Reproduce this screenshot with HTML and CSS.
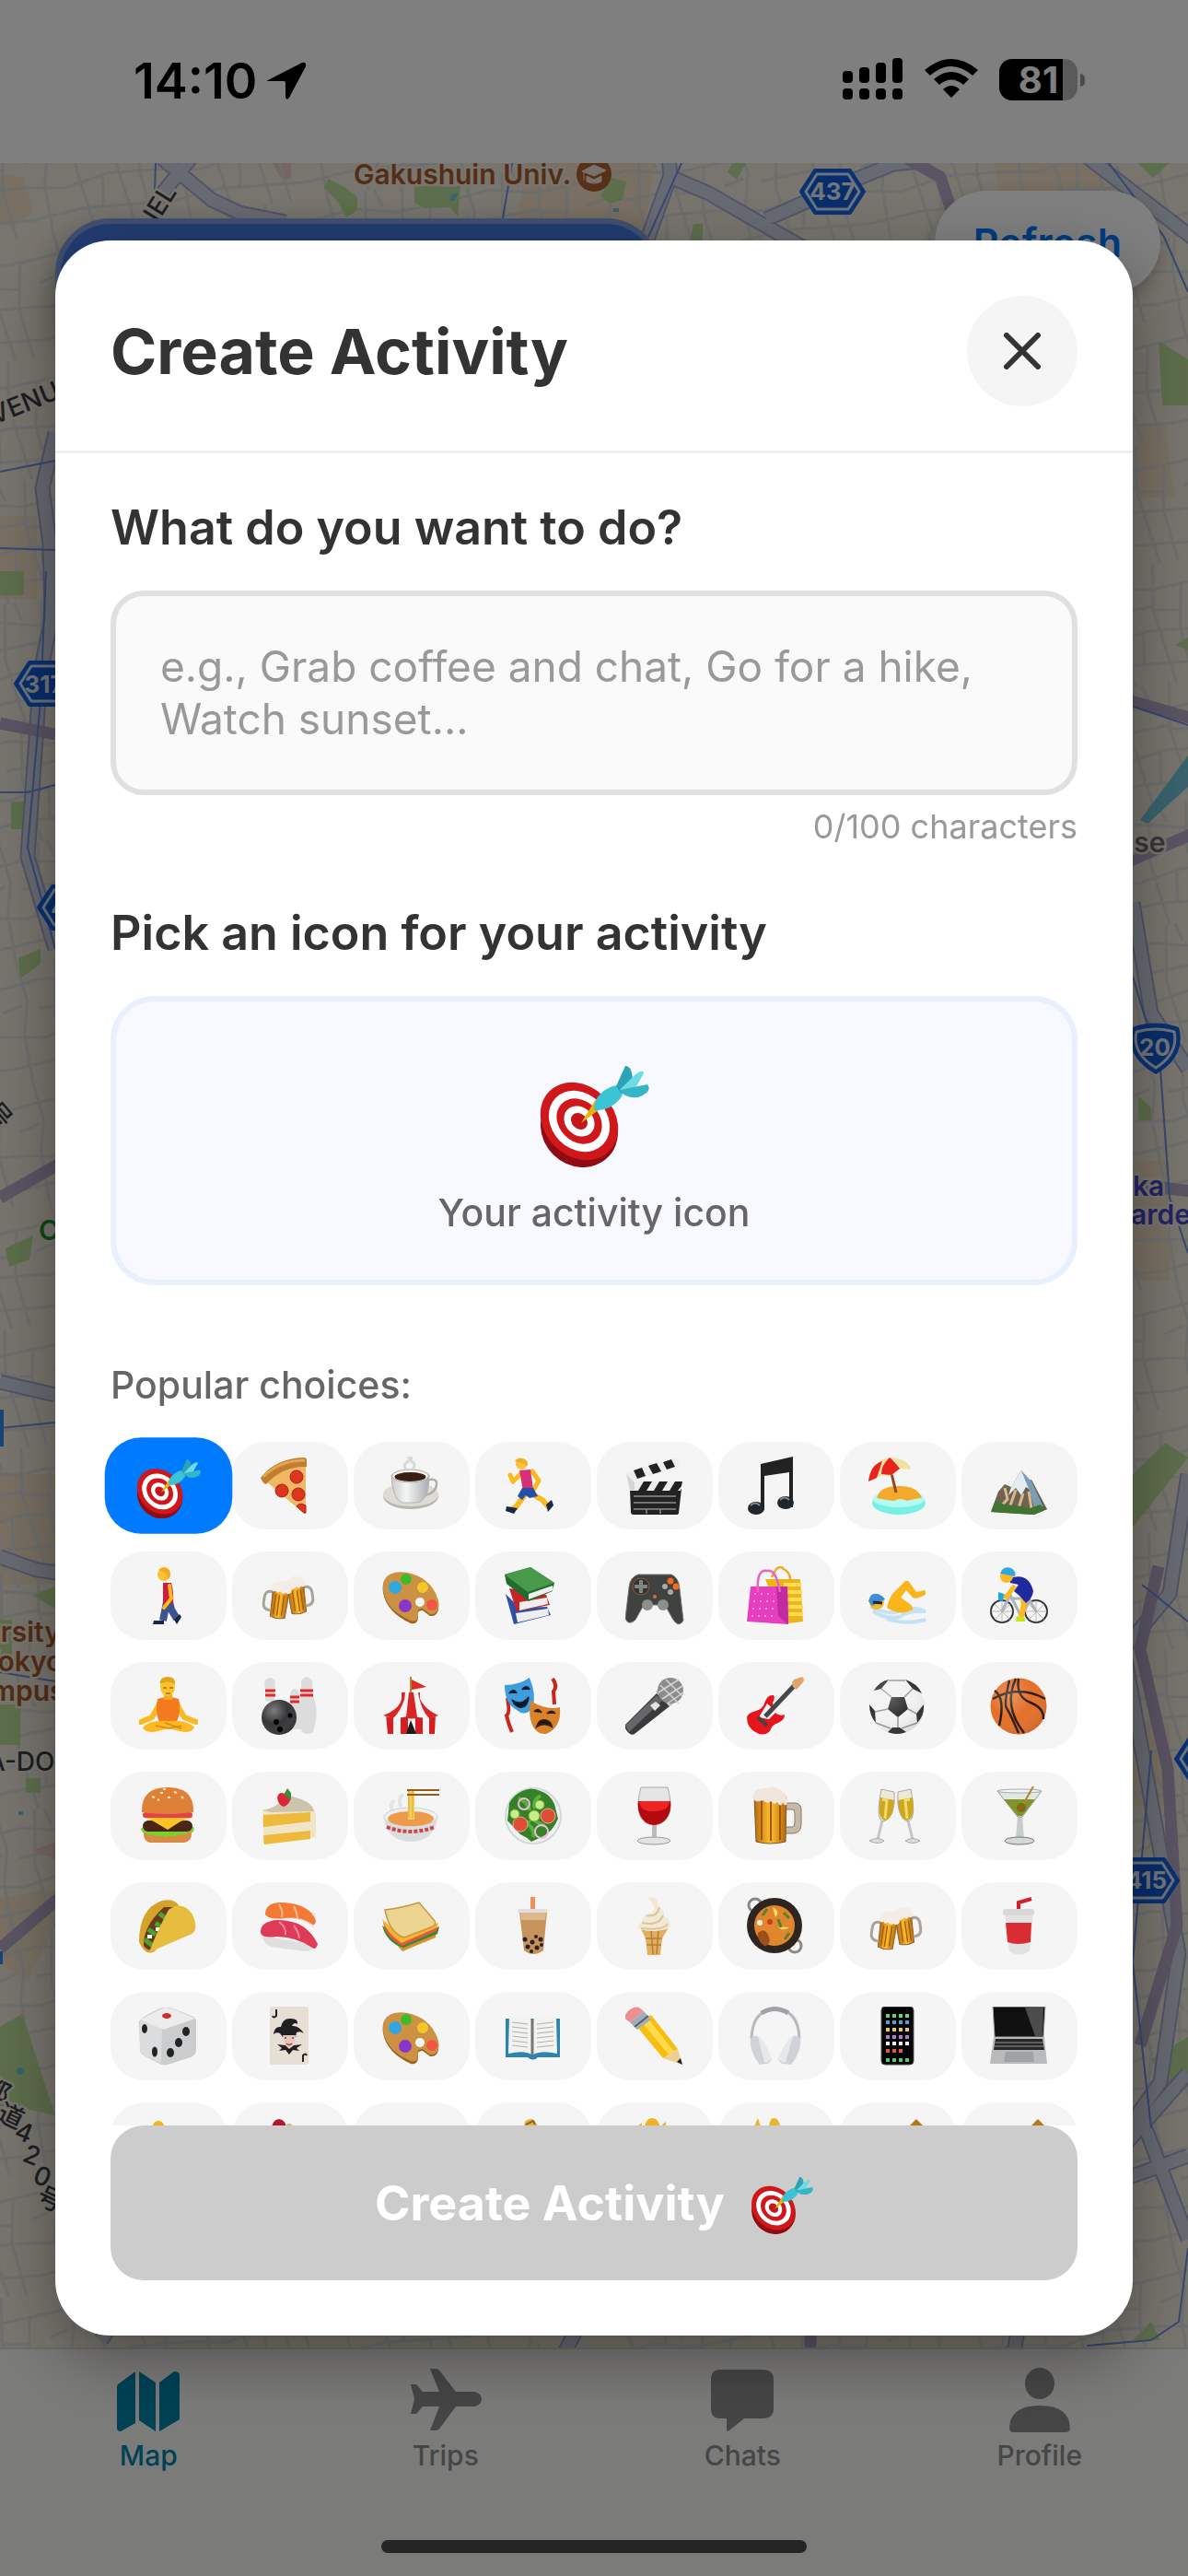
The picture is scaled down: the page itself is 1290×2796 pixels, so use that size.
FILE: index.html
```html
<!DOCTYPE html>
<html lang="en">
<head>
<meta charset="utf-8">
<meta name="viewport" content="width=device-width, initial-scale=1">
<title>Create Activity</title>
<link rel="stylesheet" href="styles.css">
</head>
<body>
<svg class="sprite" aria-hidden="true">
  <defs>
    <linearGradient id="beerFill" x1="0" x2="1" y1="0" y2="0"><stop offset="0" stop-color="#b96a10"/><stop offset=".5" stop-color="#ffc02e"/><stop offset="1" stop-color="#b5660f"/></linearGradient>
    <linearGradient id="metal" x1="0" x2="1" y1="0" y2="0"><stop offset="0" stop-color="#c9cbcd"/><stop offset=".4" stop-color="#f4f5f6"/><stop offset="1" stop-color="#a9acb0"/></linearGradient>
    <radialGradient id="ballShade" cx=".35" cy=".3" r=".8"><stop offset="0" stop-color="#fff" stop-opacity=".5"/><stop offset=".5" stop-color="#fff" stop-opacity="0"/><stop offset="1" stop-color="#000" stop-opacity=".25"/></radialGradient>
    <g id="mug">
      <path d="M19 16q9-2 9 7v6q0 7-8 7" fill="none" stroke="#a9a39a" stroke-width="3"/>
      <path d="M2 12h18l-1 30q-8 3-16 0z" fill="url(#beerFill)" stroke="#8a6a3c"/>
      <path d="M7 18v22M12 18v23M16 18v22" stroke="#a85f0c" stroke-width="1.500"/>
      <path d="M0 14q-2-8 5-9q5-5 10-1q8 0 7 9q-3 4-5 1q-2 4-5 0q-4 4-6 1q-3 2-6-1z" fill="#f4ece6"/>
    </g>
  </defs>
  <symbol id="i-target" viewBox="2 4 60 60">
    <ellipse cx="24" cy="43" rx="22" ry="20" fill="#8f0d12" transform="rotate(45 24 43)"/>
    <g transform="rotate(45 24 39)"><ellipse cx="24" cy="39" rx="23" ry="19" fill="#cf171c"/><ellipse cx="24" cy="39" rx="18" ry="15" fill="#fff"/><ellipse cx="24" cy="39" rx="13.500" ry="11" fill="#cf171c"/><ellipse cx="24" cy="39" rx="9" ry="7.500" fill="#fff"/><ellipse cx="24" cy="39" rx="5" ry="4" fill="#c4161b"/></g>
    <path d="M25 40L33 27l4 4z" fill="#e9b40c"/>
    <path d="M32 33q0-9 10-13l5-1q2 4-1 8q-6 7-14 6z" fill="#3bc4d3"/>
    <path d="M44 20l5-11q4 0 4 9l-6 6z" fill="#2aa3b4"/><path d="M46 22l8-8q5-4 5-1l-5 9z" fill="#6fdbe4"/><path d="M46 22l15-3q3 4-5 7q-7 1-10-4z" fill="#34b6c6"/>
  </symbol>
  <symbol id="i-pizza" viewBox="0 0 64 64">
    <path d="M5 26Q20 7 49 8v54q-1 1-3-1z" fill="#f0b765"/><path d="M0 23Q16 2 47 1q3 0 3 3v7Q24 10 6 30q-3 0-6-7z" fill="#c07f30"/><path d="M3 22Q20 4 48 4" stroke="#e0a651" stroke-width="3" fill="none"/>
    <g fill="#dc3520" stroke="#a92112"><circle cx="23" cy="37" r="7"/><circle cx="39" cy="22" r="7"/><circle cx="41" cy="41" r="7"/><path d="M49 53q-7-4-10 1l8 7h2z"/></g>
  </symbol>
  <symbol id="i-coffee" viewBox="0 0 64 64">
    <ellipse cx="31" cy="43" rx="30" ry="14" fill="#b9b6af"/><ellipse cx="31" cy="41" rx="30" ry="13" fill="#dedbd5"/>
    <path d="M49 26q11-4 10 5q-1 8-12 11" fill="none" stroke="#b1aea8" stroke-width="2.500"/>
    <path d="M10 20h41q0 28-13 30H22Q11 47 10 20z" fill="url(#metal)" stroke="#b5b5b2"/><ellipse cx="30.500" cy="21" rx="20" ry="7" fill="#f3f2ef" stroke="#aaa"/><ellipse cx="30.500" cy="22" rx="17" ry="5" fill="#3b1e12"/>
    <path d="M26 14q-4-5 1-8t1-6M33 14q4-5 0-8t0-5" stroke="#d8d8d8" stroke-width="3" fill="none"/>
  </symbol>
  <symbol id="i-runner" viewBox="0 0 64 64">
    <path d="M24 40L13 55l-6 3M33 42l9 5 7 8" stroke="#f9b921" stroke-width="6" fill="none" stroke-linejoin="round"/>
    <path d="M3 54l12 2-4 6-9-3zM46 52l6-5 2 6-6 7z" fill="#1b2747"/>
    <path d="M18 19l-8 8-3-7M31 16l7 10-5 9" stroke="#f9b921" stroke-width="5" fill="none" stroke-linejoin="round" stroke-linecap="round"/>
    <path d="M17 15l12-1 3 22-11 1z" fill="#d72f75"/><path d="M20 34h12l5 9-9 2-4-3-4 5-5-4z" fill="#2450a8"/>
    <circle cx="19" cy="8" r="6" fill="#fbc238"/><path d="M12 5q4-6 11-2q5 3 2 8l-3-4-6-1z" fill="#f0ae22"/>
  </symbol>
  <symbol id="i-clapper" viewBox="0 0 64 64">
    <path d="M5 35h56l-3 26q0 2-3 2H9q-3 0-3-3z" fill="#232325"/><path d="M6 27h56l-2 10H5z" fill="#eee"/><path d="M20 27h9l-6 10h-9zM37 27h9l-6 10h-9zM54 27h8l-1 5-4 5h-9z" fill="#222"/>
    <path d="M0 18L56 1l3 9L5 28z" fill="#eee"/><path d="M9 15l9-3 4 9-9 3zM25 10l9-3 5 9-9 3zM41 6l9-3 4 8-9 3z" fill="#222"/><path d="M1 19l9 9v8H5z" fill="#d5d5d5"/>
    <path d="M9 43h46M9 50h46M9 57h46M23 57v5M38 57v5" stroke="#8f8f8f" stroke-width="1.500"/>
  </symbol>
  <symbol id="i-music" viewBox="0 0 64 64">
    <path d="M15 8L50 0v55h-4V17L19 21v37h-4z" fill="#222"/><ellipse cx="10" cy="56" rx="9" ry="7" fill="#20262b"/><ellipse cx="42" cy="50" rx="9" ry="7" fill="#20262b"/><path d="M4 53q5-5 10 0M36 47q5-5 10 0" stroke="#7d8b94" stroke-width="2" fill="none"/>
  </symbol>
  <symbol id="i-beach" viewBox="0 0 64 64">
    <ellipse cx="33" cy="50" rx="29" ry="13" fill="#79f0e6"/><ellipse cx="33" cy="46" rx="28" ry="9" fill="#b5fbf2"/><path d="M9 45q3-13 24-13t25 13q-10 1-16 3-8-4-14 0-9-1-19-3z" fill="#f5a92a"/>
    <path d="M25 18l5 21" stroke="#8c4a22" stroke-width="3"/>
    <path d="M0 27Q4 2 25 1q19 2 21 13l-11-1-9 7-12 1z" fill="#f2e0a2"/><path d="M0 27Q2 9 15 5L9 23zM23 1q4 3 11 12l-9 7-11-1q0-10 9-18z" fill="#e8231d"/>
  </symbol>
  <symbol id="i-mountain" viewBox="0 0 64 64">
    <path d="M1 60l8-22 7-8 7 3L34 15l6 12 5-2 17 32-14 6z" fill="#6e6350"/><path d="M23 33L34 15l11 22-6-4-5 9-6-8-8 8z" fill="#e4edf3"/><path d="M34 15l11 12 14 30-10 2-7-24z" fill="#7d9cb5"/><path d="M16 34l3 12-8 9M28 36l-7 20M36 40l-5 16M42 38l3 18" stroke="#dcb78c" stroke-width="3" fill="none"/><path d="M1 60l5-12 10 4 12 1 16 3 10-4 8 5-14 6q-20-1-47-3z" fill="#3f7431"/>
  </symbol>
  <symbol id="i-walker" viewBox="0 0 64 64">
    <path d="M30 39l-4 20M33 39l2 8 6 10" stroke="#3b5590" stroke-width="8" fill="none"/><path d="M16 59h11v4H15zM38 58l6-6 2 3-5 8z" fill="#1b2747"/>
    <path d="M26 18h9q3 11 2 23H26z" fill="#c91f3d"/><path d="M33 21l2 14-8 10" stroke="#f9b921" stroke-width="4" fill="none" stroke-linecap="round"/><circle cx="27" cy="9" r="7" fill="#fbc238"/><path d="M21 4q6-6 12 0 2 6-1 10l-4-7z" fill="#eead22"/>
  </symbol>
  <symbol id="i-beers" viewBox="0 0 64 64">
    <g transform="translate(25 10) rotate(-8)"><use href="#mug"/></g>
    <g transform="translate(35 15) rotate(8) scale(-1 1)"><use href="#mug"/></g>
  </symbol>
  <symbol id="i-palette" viewBox="0 0 64 64">
    <path d="M2 16Q9 5 28 9q26 6 33 30 2 16-9 15l-8-6q-7 0-5 6 0 10-8 8Q5 50 1 29q-1-8 1-13z" fill="#9a6424"/><path d="M3 14Q9 4 28 7q26 6 33 30 2 16-9 15l-8-6q-7 0-5 6 0 9-8 7Q5 48 1 27q-1-8 2-13z" fill="#cd9144"/>
    <circle cx="41" cy="39" r="5" fill="#f5f5f5"/><circle cx="14" cy="23" r="7" fill="#33a6df"/><circle cx="26" cy="14" r="6" fill="#3dbb2a"/><circle cx="44" cy="23" r="6" fill="#f4c62c"/><circle cx="54" cy="42" r="6" fill="#f25446"/><circle cx="25" cy="43" r="7" fill="#8738c8"/>
  </symbol>
  <symbol id="i-books" viewBox="0 0 64 64">
    <path d="M2 30l9 33 40-10-4-9-30 1z" fill="#2d51a5"/><path d="M13 51l35-5 1 7-34 8z" fill="#eee"/><path d="M6 24l8 25 36-7-4-11z" fill="#c82327"/><path d="M17 39l30-5 1 7-31 7z" fill="#eee"/>
    <path d="M1 9L29 1l26 17-2 9-26 11L3 19z" fill="#256b2d"/><path d="M1 9L29 1l26 17-29 10z" fill="#479a49"/><path d="M27 30l26-9 1 5-27 10z" fill="#eee"/>
  </symbol>
  <symbol id="i-gamepad" viewBox="0 0 64 64">
    <path d="M14 9h36q8 3 9 16l4 34q-5 8-11-1l-9-16H20l-9 16q-7 7-11-1l4-34Q5 12 14 9z" fill="#3f423f" stroke="#727672"/><circle cx="17" cy="22" r="9" fill="#303331" stroke="#9a5a30"/><path d="M17 15v14M10 22h14" stroke="#80857f" stroke-width="4"/><circle cx="24" cy="42" r="6" fill="#8b908c"/><circle cx="41" cy="42" r="6" fill="#8b908c"/><circle cx="49" cy="16" r="3.500" fill="#f26a22"/><circle cx="49" cy="28" r="3" fill="#aaa"/><circle cx="43" cy="22" r="3" fill="#aaa"/><circle cx="55" cy="22" r="3.500" fill="#f26a22"/><circle cx="32" cy="33" r="2" fill="#e3682a"/>
  </symbol>
  <symbol id="i-bags" viewBox="0 0 64 64">
    <path d="M20 14h38l3 46-16 2-8-4z" fill="#edb51b"/><path d="M40 20h19M40 28h20M42 36h18M43 44h18M44 52h17" stroke="#ffdb55" stroke-width="4"/><path d="M27 12Q34-4 40 3q8 4 7 14" stroke="#f0a929" stroke-width="2.500" fill="none"/>
    <path d="M4 22h40l1 41-45-3z" fill="#e73dbf"/><path d="M32 22h12l1 41-11-9z" fill="#c22aa0"/><path d="M12 28Q10 3 22 5q10-2 14 23" stroke="#e765bd" stroke-width="2.500" fill="none"/><path d="M8 30h22M7 38h24M6 46h25M5 54h25" stroke="#ff94e3" stroke-width="2" stroke-dasharray="2 5"/>
  </symbol>
  <symbol id="i-swimmer" viewBox="0 0 64 64">
    <path d="M2 44q20 10 34 4 14-5 26 1-20-1-28 6-15 3-29-6M20 57q20 7 42 1" stroke="#c3e3f5" stroke-width="4" fill="none"/><path d="M20 45q3-13 9-18l10-10q3-3 6 1l7 10 9-2q3 4-1 6-8 4-12 2l-7-8-6 8 10 7q4 3 3 6-13 8-28-2z" fill="#fab51b"/><circle cx="9" cy="39" r="8" fill="#f9b921"/><path d="M0 38q2-10 10-8 6 2 8 6L4 43z" fill="#3e8fd1"/><path d="M5 39l10 1" stroke="#223" stroke-width="3"/>
  </symbol>
  <symbol id="i-cyclist" viewBox="0 0 64 64">
    <g fill="none" stroke="#333" stroke-width="2"><circle cx="13" cy="49" r="12"/><circle cx="50" cy="49" r="12"/></g><path d="M13 37v24M1 49h24M5 41l17 17M22 41L5 58M50 37v24M38 49h24M42 41l17 17M59 41L42 58" stroke="#aaa" stroke-width=".8"/>
    <path d="M13 49l9-18 12 24 10-20M22 35h20l8 14" stroke="#aeb3b8" stroke-width="3" fill="none"/><path d="M35 28l2 13-3 14" stroke="#f9b921" stroke-width="6" fill="none"/><path d="M29 54l9 2v4H28z" fill="#c5e319"/><path d="M21 13q21-7 26 14-1 8-8 13l-7-8-6-5 5-7-9-2z" fill="#1d2aa0"/><path d="M27 21l-9 12-7-1" stroke="#f9b921" stroke-width="5" fill="none"/><path d="M9 28l6 2-1 8-5-1z" fill="#1ea7e8"/><circle cx="18" cy="11" r="7" fill="#f9b921"/><path d="M11 8q3-9 12-6 6 4 4 9L12 8z" fill="#2ea7e2"/>
  </symbol>
  <symbol id="i-yoga" viewBox="0 0 64 64">
    <path d="M23 28L14 44l-12 5M40 28l9 16 13 5" stroke="#f9b921" stroke-width="6" fill="none" stroke-linecap="round" stroke-linejoin="round"/><path d="M20 24q12-4 23 0 3 13-2 25H22q-5-11-2-25z" fill="#f47a20"/><path d="M4 55q8-9 28-7 20-2 28 7-3 7-16 4l-12-3-12 3q-13 3-16-4z" fill="#fcb924"/><path d="M18 53l14 3 14-3M28 50l18 6" stroke="#d78a10" stroke-width="1.500" fill="none"/><path d="M27 17h9v8h-9z" fill="#f2ab17"/><ellipse cx="31" cy="11" rx="8" ry="10" fill="#fcc32e"/><path d="M23 8q-1-8 8-8t8 8q-8-5-16 0z" fill="#e4a31d"/><path d="M26 12h4M33 12h4M29 18h5" stroke="#7c4610" stroke-width="1"/>
  </symbol>
  <symbol id="i-bowling" viewBox="0 0 64 64">
    <path d="M5 26V14q-3-12 5-13 8 1 5 13v14zM32 30q-2-16 5-17 7 1 5 17l2 27H30zM43 24q2-5 1-12-1-11 6-12 8 1 6 12 0 6 3 14 4 16-2 34-6 4-12 0-7-18-2-36z" fill="#dcdcdc"/><path d="M5 15h11M5 20h11M32 22h10M32 27h10M43 15h14M43 20h14" stroke="#df2929" stroke-width="3"/><circle cx="20" cy="44" r="19" fill="#363638"/><circle cx="20" cy="44" r="19" fill="url(#ballShade)" opacity=".7"/><circle cx="17" cy="49" r="3"/><circle cx="32" cy="42" r="2.500"/><circle cx="21" cy="57" r="3"/>
  </symbol>
  <symbol id="i-circus" viewBox="0 0 64 64">
    <path d="M31 0v20" stroke="#b28c2c" stroke-width="2"/><path d="M32 3l16 8-16 3z" fill="#e12a24"/><path d="M4 40h54l-1 22H5z" fill="#f2f2f2"/><path d="M4 40h8v22H6zM20 40h8v22h-8zM36 40h8v22h-8zM51 40h7l-1 22h-6z" fill="#d41f22"/><path d="M21 17h20v7q4 10 20 18-15 5-30 0-17 5-30 0 18-7 20-18z" fill="#f4f4f4"/><path d="M21 17h4l-1 8Q20 37 12 45l-11-3q18-7 20-18zM29 17h5l4 27q-6 3-12 0zM39 17h2v7q4 10 20 18l-10 3Q42 36 39 17z" fill="#da2525"/><path d="M26 62l5-15 6 15z" fill="#1b1b1b"/>
  </symbol>
  <symbol id="i-masks" viewBox="0 0 64 64">
    <path d="M4 23q3 17-1 19 2 9 6 18M53 2q6 8 1 14l1 14" stroke="#c7271c" stroke-width="4" fill="none"/><path d="M1 9Q16 9 28 1q8 19 3 33-8 10-17 2Q1 29 1 9z" fill="#3d9ddd"/><path d="M6 18q5-6 8 0M20 14q5-6 8 0M10 26q10 6 17-4-2 12-9 11-6-1-8-7z" stroke="#123" stroke-width="2" fill="#112"/>
    <path d="M29 26q18 11 32 7 2 22-15 29-13 1-17-16-2-10 0-20z" fill="#d9822a"/><path d="M33 38q4-5 8 1M47 40q5-5 9 0M36 54q2-8 9-7 6 1 7 7-8-5-16 0z" stroke="#321" stroke-width="2" fill="#211"/>
  </symbol>
  <symbol id="i-mic" viewBox="0 0 64 64">
    <path d="M34 18l14 14L10 62q-5 3-10-6v-4z" fill="#3a3a3c"/><path d="M34 20l6 6L4 60l-4-7z" fill="#67676a"/><path d="M33 16l16 16 4-4L37 12z" fill="#bbb"/><circle cx="49" cy="15" r="14" fill="#8c8c8e"/><path d="M38 9l20 20M44 3l18 18M36 17l22-14M40 24l22-14M46 29l17-12" stroke="#d4d4d5" stroke-width="1.500"/><path d="M27 31l6-4 5 4-6 6z" fill="#e6e6e6"/>
  </symbol>
  <symbol id="i-guitar" viewBox="0 0 64 64">
    <path d="M0 44q1-5 10-7 8-3 9-8 3-10 10-9 2 3-1 8 1 9 4 12 5 3 9 1 0 6-7 9-7 2-9 9-6 6-14 2Q0 56 0 44z" fill="#e6141d"/><path d="M22 29l10 9-8 8-11-2z" fill="#f1f1f1"/><path d="M20 43L52 9" stroke="#44474c" stroke-width="5"/><path d="M50 11q-2-5 1-8l9-3q4 3 0 7l-6 7z" fill="#e6a46b"/><path d="M12 44l10 9" stroke="#444" stroke-width="4"/>
  </symbol>
  <symbol id="i-soccer" viewBox="0 0 64 64">
    <circle cx="31" cy="32" r="30" fill="#f2f2f2"/><g fill="#333"><path d="M25 22h14l4 13-11 9-11-9z"/><path d="M40 3q13 4 18 15L48 13zM6 15Q12 5 22 3l-8 10zM1 30l6 7 1 13Q1 42 1 30zM60 30q1 12-7 20l-1-10zM21 60q10 4 20 0l-7-5h-8z"/></g><path d="M25 22L14 13M39 22l9-9M43 35l9 5M32 44v11M21 35L7 38M22 4l18 0M8 50l16 6M53 50l-17 6" stroke="#999" stroke-width="1.500"/><circle cx="31" cy="32" r="30" fill="url(#ballShade)" opacity=".5"/>
  </symbol>
  <symbol id="i-basketball" viewBox="0 0 64 64">
    <circle cx="31" cy="32" r="30.500" fill="#e4702a"/><path d="M3 24q28-16 57 0M28 2q-14 30 9 59M21 4Q15 30 18 34t13 27M31 2q-3 20 13 26 15 6 14 18M5 15q12 8 5 38" stroke="#2a1a14" stroke-width="2.500" fill="none"/><circle cx="31" cy="32" r="30.500" fill="url(#ballShade)" opacity=".5"/>
  </symbol>
  <symbol id="i-burger" viewBox="0 0 64 64">
    <path d="M5 48h52q1 12-8 13H12Q4 60 5 48z" fill="#d98a45"/><path d="M2 46q5-5 8-2 20-6 49 0 2 5-2 6-4-2-7 3-4-3-8 0-5 3-9 0-5 4-9 0-5 3-10-1-4 2-6-1-5 0-6-5z" fill="#7bd12b"/><rect x="4" y="37" width="54" height="12" rx="6" fill="#4a2414"/><path d="M4 33h55L45 38 31 47 16 38z" fill="#fcc324"/><rect x="4" y="28" width="54" height="6" rx="3" fill="#e3424b"/><path d="M3 28Q2 1 31 1t28 27q-28 4-56 0z" fill="#de8137"/><path d="M14 11l3 1M23 7h3M31 12h3M38 6l3 1M46 11l2 2M26 3h3M20 15l2-1" stroke="#fbe3b4" stroke-width="2"/>
  </symbol>
  <symbol id="i-cake" viewBox="0 0 64 64">
    <path d="M2 26q20-4 24-17 31 6 34 22v24L3 63z" fill="#f0e5c7"/><path d="M2 26q20-4 24-17 31 6 32 18L12 28z" fill="#cdc4ae"/><path d="M3 31l51-3v10L3 44zM3 53l51-5v9L4 63z" fill="#efb93c"/><path d="M18 12q2-7 8-4 8 0 7 5-3 8-8 9-6-2-7-10z" fill="#dc2537"/><path d="M25 9l4-7 4 5v8z" fill="#418c35"/>
  </symbol>
  <symbol id="i-ramen" viewBox="0 0 64 64">
    <path d="M11 27q-3-8 2-12M20 22q-3-10 3-13" stroke="#e4e4e4" stroke-width="4" fill="none"/><path d="M2 34h58q-2 18-17 24-12 4-24 0Q4 52 2 34z" fill="#dadcde"/><ellipse cx="31" cy="33" rx="29" ry="10" fill="#f0f0f0" stroke="#cfcfcf"/><ellipse cx="31" cy="35" rx="25" ry="8" fill="#ee9a4b"/><path d="M28 3h7v33h-7z" fill="#f6d159"/><path d="M29 4v30M33 4v31" stroke="#d9aa31"/><path d="M27 4h35M27 9h35" stroke="#935c1f" stroke-width="2"/><path d="M5 44q26 10 52 0" stroke="#c94746" stroke-width="4" stroke-dasharray="4 2" fill="none"/>
  </symbol>
  <symbol id="i-salad" viewBox="0 0 64 64">
    <circle cx="32" cy="32" r="31" fill="#d2d8d9"/><circle cx="32" cy="32" r="29" fill="#f0f2f2"/><path d="M20 5q10-5 20 0 10 3 15 14l4 16q-6 14-16 19l-13 6q-5-5-12-8L4 37l2-19q5-9 14-13z" fill="#34812a"/><path d="M16 13q10 3 12 13M40 10q-9 5-6 14M24 40q10 5 8 15M44 43l-11-6M15 42q8-4 14-3" stroke="#58b13c" stroke-width="4" fill="none"/><g fill="#df4d38" stroke="#f2a490"><circle cx="18" cy="41" r="8"/><circle cx="48" cy="32" r="8"/></g><g fill="#c9ec88" stroke="#72b03a"><circle cx="12" cy="30" r="5"/><circle cx="33" cy="32" r="6"/><circle cx="39" cy="20" r="5"/></g><g fill="none" stroke="#edbad3" stroke-width="2"><circle cx="22" cy="19" r="6"/><circle cx="41" cy="49" r="7"/></g>
  </symbol>
  <symbol id="i-wine" viewBox="0 0 64 64">
    <path d="M29 41h5v16h-5z" fill="#bbb"/><ellipse cx="31" cy="59" rx="18" ry="4" fill="#e3e3e3" stroke="#999"/><path d="M17 1h29q5 18 2 28-4 12-17 13-13-1-16-13-3-10 2-28z" fill="#e5e5e5" stroke="#aaa"/><path d="M14 16h35q1 9-2 15-5 10-16 11-11-1-15-11-3-6-2-15z" fill="#b4090d"/><path d="M15 16h33q0 10-16 11T15 16z" fill="#ed2424"/>
  </symbol>
  <symbol id="i-beer" viewBox="0 0 64 64">
    <path d="M40 18h13q7 1 6 10v13q0 9-8 10H40v-7h9q3 0 3-4V28q0-3-3-3h-9z" fill="#c5b9a9" stroke="#8b7864"/><path d="M8 11h35l-1 49q-17 4-32 0z" fill="url(#beerFill)" stroke="#79582d"/><path d="M16 15v43M26 15v44M36 15v43" stroke="#9f5909" stroke-width="2"/><path d="M6 13Q7 1 22 2q9-4 17 4 8 6 4 14-3 1-4-3-2 7-6 0-3 4-7-1-4 4-8-1-9 3-12-2z" fill="#f0e5dc"/>
  </symbol>
  <symbol id="i-champagne" viewBox="0 0 64 64">
    <path d="M15 37l-5 21M43 37l5 21" stroke="#c5c5c5" stroke-width="3"/><path d="M1 59q9-5 16 0-6 5-16 0zM40 59q8-5 16 0-8 5-16 0z" fill="#ddd" stroke="#aaa"/><path d="M14 3l14 3q2 27-11 32Q7 38 14 3zM46 3L32 6q-2 27 10 32 11 0 4-35z" fill="#ede9d8" stroke="#aaa"/><path d="M13 12l15 3q-1 20-10 22-9-2-5-25zM48 12l-16 3q1 20 10 22 9-2 6-25z" fill="#cda722"/><path d="M15 14l5 1-2 20M45 14l-5 1 2 20" fill="none" stroke="#f1dc67" stroke-width="3"/>
  </symbol>
  <symbol id="i-martini" viewBox="0 0 64 64">
    <path d="M30 31h5l2 27h-9z" fill="#c6cccb"/><ellipse cx="32" cy="59" rx="16" ry="4" fill="#d3d8d8" stroke="#777"/><path d="M8 5h48L35 33h-5z" fill="#dfe8e5" stroke="#999"/><path d="M15 14h34L35 32h-5z" fill="#85922c"/><ellipse cx="32" cy="5" rx="24" ry="2" fill="#f2f5f5" stroke="#aaa"/><path d="M47 0L34 23" stroke="#b9812b" stroke-width="2"/><circle cx="34" cy="23" r="5" fill="#697715"/><circle cx="33" cy="24" r="2" fill="#d6401b"/>
  </symbol>
  <symbol id="i-taco" viewBox="0 0 64 64">
    <path d="M0 49Q0 12 25 4q13-3 18 5L18 58q-10 8-18-9z" fill="#d5a22a"/><path d="M5 53Q4 32 27 11h12L18 56q-8 4-13-3z" fill="#6b3a1d"/><path d="M10 35l8 6M22 18l8 6M6 46l10 8M18 28l6 5" stroke="#4aa331" stroke-width="5"/><path d="M9 43h5M18 35h5" stroke="#fff" stroke-width="4"/><path d="M11 60q8-22 21-46 15-11 26 5 8 18-3 22z" fill="#e7bd3d"/>
  </symbol>
  <symbol id="i-sushi" viewBox="0 0 64 64">
    <path d="M5 15q4 10 24 8 20 1 28 10 5-8 2-16z" fill="#e2e2df"/><path d="M5 19Q5 5 25 6q29 2 35 20-1 6-5 3-12-8-29-6T5 19z" fill="#f27a35"/><path d="M20 8q5 8 3 14M36 10q4 8 4 14" stroke="#ffb98a" stroke-width="2" fill="none"/><path d="M2 42q1 12 16 13l30 4q9 0 10-7z" fill="#dfdfdc"/><path d="M0 39q-1-12 17-14 32-1 45 26-2 7-6 4-18-12-39-12-15 2-17-4z" fill="#dd3b58"/><path d="M20 27q8 6 7 14M36 31q5 6 6 14" stroke="#f58a9a" stroke-width="2" fill="none"/>
  </symbol>
  <symbol id="i-sandwich" viewBox="0 0 64 64">
    <path d="M2 36l20 23 36-15 1-9-35 14z" fill="#d8912f"/><path d="M0 31q11 7 17 17l6 2 35-16 4-2-2 8-37 15Q5 50 0 31z" fill="#3b8a2b"/><path d="M1 27l21 21 38-17-1 6-37 16Q4 45 1 27z" fill="#e45748"/><path d="M0 24l22 20 39-16-1 5-39 17Q4 38 0 24z" fill="#f5b62c"/><path d="M3 14q18-2 37-8l17 20q2 4-2 6L24 44l-5-2Q7 35 3 14z" fill="#ecd590" stroke="#c99742" stroke-width="1.500"/>
  </symbol>
  <symbol id="i-boba" viewBox="0 0 64 64">
    <path d="M29 0h5v16h-5z" fill="#ee8f5f"/><path d="M17 16h30l-4 42q-11 8-21 0z" fill="#c6935c"/><path d="M18 17h28l-1 8H19z" fill="#ddb88c"/><rect x="15" y="13" width="33" height="4" rx="2" fill="#dfdfdf"/><g fill="#2b2226"><circle cx="23" cy="46" r="2.500"/><circle cx="31" cy="49" r="2.500"/><circle cx="40" cy="46" r="2.500"/><circle cx="26" cy="54" r="2.500"/><circle cx="36" cy="55" r="2.500"/><circle cx="41" cy="52" r="2"/><circle cx="30" cy="59" r="2"/><circle cx="35" cy="43" r="2"/></g>
  </symbol>
  <symbol id="i-icecream" viewBox="0 0 64 64">
    <path d="M16 33h31l-7 12-2 18H24l-2-18z" fill="#e2ae62"/><path d="M22 45h18M23 52h16M28 35l2 27M36 35l-2 27" stroke="#b97d35" stroke-width="1.500"/><path d="M24 1q14-3 11 9 8 4 7 11 7 3 6 8 3 4-4 6-16 4-28 0-5-5 2-8 0-7 8-9 12-5-2-17z" fill="#f3e9d3"/><path d="M23 20q12 2 14-9M18 28q18 4 23-8M17 34q24 3 29-5" stroke="#d6c6a3" stroke-width="2" fill="none"/>
  </symbol>
  <symbol id="i-paella" viewBox="0 0 64 64">
    <g fill="none" stroke="#888" stroke-width="3"><circle cx="9" cy="9" r="7"/><circle cx="52" cy="53" r="7"/></g><circle cx="30" cy="31" r="30" fill="#2e2521"/><circle cx="30" cy="31" r="22" fill="#e0862c"/><path d="M12 39q9-8 13 8-2 7-6 6-8-5-7-14z" fill="#9c4f1c"/><path d="M28 11q9 5 3 11zM46 33q-8 5-12-1z" fill="#f8df69"/><path d="M17 20l5-7M40 17l6 6M41 46l5-7M34 24l3 9" stroke="#56822e" stroke-width="3"/><circle cx="14" cy="28" r="3" fill="#f6efe2"/><circle cx="25" cy="27" r="3" fill="#c73e16"/>
  </symbol>
  <symbol id="i-soda" viewBox="0 0 64 64">
    <path d="M31 15V6l14-4" stroke="#d3202b" stroke-width="4" fill="none"/><path d="M16 17h31l-4 42q-11 7-22 0z" fill="#e2e2e2"/><rect x="14" y="13" width="34" height="7" rx="3" fill="#d8d8d8"/><path d="M17 28h28l-1 21q-14 4-25 0z" fill="#da2d33"/>
  </symbol>
  <symbol id="i-dice" viewBox="0 0 64 64">
    <path d="M0 16Q2 11 25 1q7-2 32 9 6 2 5 9v28q0 5-6 8L31 63q-5 1-9-1L5 53q-4-2-4-8z" fill="#cbcccd"/><path d="M1 14L27 1q6-1 34 12L29 24q-3 1-6 0z" fill="#ececec"/><path d="M25 24L1 15v30q0 6 5 8l18 9z" fill="#dbdcdd"/><ellipse cx="30" cy="10" rx="5" ry="3" fill="#d62a2a"/><g fill="#222"><ellipse cx="6" cy="24" rx="3" ry="5"/><ellipse cx="17" cy="49" rx="3" ry="5.500"/><ellipse cx="51" cy="27" rx="4" ry="5"/><ellipse cx="43" cy="39" rx="4" ry="5"/><ellipse cx="34" cy="50" rx="4" ry="5"/></g>
  </symbol>
  <symbol id="i-joker" viewBox="0 0 64 64">
    <rect x="10" y="0" width="42" height="63" rx="3" fill="#e8dfd4"/><path d="M17 3v7q-3 3-4 0M46 60v-7q3-3 4 0" stroke="#222" stroke-width="2" fill="none"/><path d="M14 30q1-9 8-8 2-10 11-9 8 0 7 6-4-3-6 2 7-1 13 8-4-3-8-1l-1 5H24l-3-4q-4-2-7 1z" fill="#202023"/><path d="M24 31h14l-2 10-5 4-5-4z" fill="#e2c9bd"/><path d="M26 34h2M34 34h2M28 40q3 3 6 0" stroke="#b2302c" stroke-width="1.500" fill="none"/><path d="M18 41l9 1 4 4 5-4 9-1-6 4 3 3-7-1-4 5-4-5-7 1 3-3z" fill="#202023"/>
  </symbol>
  <symbol id="i-book" viewBox="0 0 64 64">
    <path d="M2 13h59v42H37q-5 5-11 0H2z" fill="#2f84ad"/><path d="M6 11q16-4 24 3v38q-8-5-25-1z" fill="#f2f2f0"/><path d="M57 11q-16-4-25 3v38q9-5 26-1z" fill="#f2f2f0"/><path d="M31 14v38" stroke="#777" stroke-width="3"/><path d="M9 17l17 2M9 22l17 2M9 27l17 2M9 32l17 2M9 37l17 2M9 42l17 2M36 19l18-2M36 24l18-2M36 29l18-2M36 34l18-2M36 39l18-2M36 44l18-2" stroke="#b0b0b0"/>
  </symbol>
  <symbol id="i-pencil" viewBox="0 0 64 64">
    <path d="M12 21l16-12 29 37-16 10z" fill="#f8bd15"/><path d="M18 17l6-5 29 37-6 3z" fill="#ffda49"/><path d="M41 56l16-10 5 17z" fill="#f0cf94"/><path d="M56 60l4-4 2 7z" fill="#222"/><path d="M5 17L20 5l8 9-15 11z" fill="#a3adb9"/><path d="M5 17l15-12-5-4Q9-1 3 5t-2 9z" fill="#ef8d8f"/><path d="M10 22l15-12" stroke="#56606c" stroke-width="2"/>
  </symbol>
  <symbol id="i-headphones" viewBox="0 0 64 64">
    <path d="M5 35Q6 3 31 3t26 32" stroke="#b6b9bd" stroke-width="3" fill="none"/><path d="M16 7q14-9 29 0" stroke="#9fa3a8" stroke-width="5" fill="none"/><path d="M4 34q4-3 8-2l15 25q-2 6-8 5l-5 1Q2 48 4 34z" fill="#cfd2d6"/><path d="M58 34q-4-3-8-2L34 57q2 6 8 5l6 1q12-15 10-29z" fill="#cfd2d6"/><path d="M12 33q6-1 15 24-5 5-8 3zM50 33q-6-1-16 24 5 5 8 3z" fill="#e6e8ea"/>
  </symbol>
  <symbol id="i-phone" viewBox="0 0 64 64">
    <rect x="14" y="0" width="35" height="63" rx="4" fill="#050505" stroke="#555"/><g stroke-width="4" fill="none"><path d="M19 10h28" stroke="#6fd26d" stroke-dasharray="4 3"/><path d="M19 17h28" stroke="#4aa1df" stroke-dasharray="4 3"/><path d="M19 25h28" stroke="#f0c65f" stroke-dasharray="4 3"/><path d="M19 33h28" stroke="#b875d9" stroke-dasharray="4 3"/><path d="M19 40h28" stroke="#eee" stroke-dasharray="4 3"/><path d="M19 48h21" stroke="#e0574e" stroke-dasharray="4 3"/><path d="M19 58h28" stroke="#58c96c" stroke-dasharray="4 3"/></g>
  </symbol>
  <symbol id="i-laptop" viewBox="0 0 64 64">
    <path d="M3 0h57l-2 33H5z" fill="#111" stroke="#aaa"/><path d="M38 1h20l-1 31h-8z" fill="#4c4c4c"/><path d="M4 33h55l3 29H0z" fill="#b9babb"/><path d="M6 35h51l2 12H4z" fill="#272727"/><path d="M6 39h52M5 43h53" stroke="#999"/><path d="M17 49h30l1 11H15z" fill="#a1a2a3"/>
  </symbol>
  <symbol id="i-person" viewBox="0 0 64 64"><path d="M14 16q0-12 7-12t7 12v28H14z" fill="#f6b51c"/></symbol>
  <symbol id="i-dancer" viewBox="0 0 64 64"><path d="M12 14Q12 3 20 2q7 1 8 9l-8 30h-8z" fill="#b01830"/><circle cx="31" cy="11" r="4" fill="#eab06a"/></symbol>
  <symbol id="i-ribbon" viewBox="0 0 64 64"><path d="M10 30h44v24H10z" fill="#d9a33b"/></symbol>
  <symbol id="i-climber" viewBox="0 0 64 64"><path d="M22 10q0-9 9-8 5 4 7 10v30H22z" fill="#e5b541"/><path d="M24 8l8-4 2 4" stroke="#8b6420" stroke-width="2" fill="none"/></symbol>
  <symbol id="i-juggler" viewBox="0 0 64 64"><path d="M21 12q1-11 8-11t9 11v30H20zM14 9l4-3v30h-4zM40 8l4-3v30h-4z" fill="#f1b324"/></symbol>
  <symbol id="i-cheer" viewBox="0 0 64 64"><path d="M8 10l4-9 3 9v30H8zM24 10q1-10 6-9t6 9v30H24z" fill="#ecb42a"/></symbol>
  <symbol id="i-rower" viewBox="0 0 64 64"><path d="M42 12L52 2l9 9v30H42z" fill="#b67817"/><path d="M47 14l5-5 6 6v20H47z" fill="#f6c736"/></symbol>
</svg>

<div class="screen">
  <header class="status">
    <div class="status-left">
      <span>14:10</span>
      <svg width="44" height="42" viewBox="0 0 44 42" aria-hidden="true"><path d="M2 20L39 1q5-1 4 4L25 39q-3 4-4-1V23q0-2-2-2H3q-4 0-1-1z"/></svg>
    </div>
    <div class="status-right">
      <svg width="66" height="46" viewBox="0 0 66 46" aria-hidden="true"><rect y="14" width="11" height="13" rx="4"/><rect x="18" y="10" width="11" height="17" rx="4"/><rect x="36" y="5" width="11" height="22" rx="4"/><rect x="54" width="11" height="27" rx="4"/><rect y="33" width="11" height="12" rx="4"/><rect x="18" y="33" width="11" height="12" rx="4"/><rect x="36" y="33" width="11" height="12" rx="4"/><rect x="54" y="33" width="11" height="12" rx="4"/></svg>
      <svg width="58" height="46" viewBox="0 0 58 46" aria-hidden="true"><path d="M0 13Q29-11 58 13l-6 6Q29-1 6 19zM10 23q19-16 38 0l-6 6q-13-11-26 0zM20 34q9-8 18 0l-9 9z"/></svg>
      <div class="battery"><span>81</span></div>
    </div>
  </header>

  <main class="map">
    <svg class="map-art" viewBox="0 177 1290 2371" preserveAspectRatio="xMidYMid slice" aria-hidden="true">
      <defs>
        <pattern id="streets" width="150" height="130" patternUnits="userSpaceOnUse" patternTransform="rotate(-8)">
          <path d="M0 24L48 18 96 28 150 24M0 76l40 6 50-10 60 4M0 112l60-6 90 6M22 0l6 40-8 36 2 54M64 0l-8 60 12 70M104 0l-6 50 14 80M132 24l-8 50 8 56M40 50l58-4M0 50l22-6M98 50l28 4M80 20L74 0M84 72l-4 36" fill="none" stroke="#d9dcda" stroke-width="3"/>
        </pattern>
        <g id="hex" stroke-linejoin="round">
          <path d="M-19-23h38l15 23-15 23h-38l-15-23z" fill="#1164e6" stroke="#1164e6" stroke-width="4"/>
          <path d="M-17-19h34l12 19-12 19h-34l-12-19z" fill="#0f5cd8" stroke="#dbe6fa" stroke-width="3"/>
        </g>
      </defs>
      <rect y="177" width="1290" height="2371" fill="#f1eadc"/>
      <g fill="#f3e0c6"><path d="M0 190l26 2 10 38-18 14H0zM570 177h140l-10 80H560zM1080 177h130l-30 60h-90zM0 560h40v90H0zM1235 460h30l10 80h-40zM0 1600h60v120H0zM1230 1260h40v130h-40zM0 2060l60-10v40l-30 60-30-20zM1230 1870h40v90h-40z"/></g>
      <path d="M296 177h20v18l-12-3zM60 2000l-25 8 25 10z" fill="#f0cac4"/>
      <rect y="177" width="1290" height="2371" fill="url(#streets)"/>
      <g fill="#bbdd98"><path d="M356 194l20 10 12 10v14l-12 8-10-18-14-14zM450 202h50l-3 33-8-10-28 1-11-6zM664 193l16 4-4 20-14 4-10-8zM795 177h15l-10 18-10-8zM753 243h10v18h-14zM1235 177h35l-18 16zM0 620h26v26H0zM44 600h16v36H50zM12 870h20v30H12zM20 1040l24-10v16l-22 16zM6 1355l30-14-4 26-22 8zM0 1758h13v52H0zM36 1732l24-10v24zM0 1850h22v44H0zM28 1930h16v16H28zM0 2200l24-14 36 110-44-10H0zM1258 370l32 20v50h-28zM1276 700l14-8v14zM1236 1190l14 12v14h-14zM1230 1600l36-34 24 16-60 76zM1250 2235l40-24v54l-18 10zM1230 2540l20-20 10 20z"/></g>
      <g fill="#72c7dc"><path d="M490 211l8-2-4 8-6 2zM666 226h6v4h-6zM1290 820v34l-44 40-8-4z"/><circle cx="22" cy="2248" r="4"/><rect x="20" y="1966" width="5" height="4"/></g>
      <g fill="none" stroke-linejoin="round">
        <g stroke="#a4a8cf" stroke-width="17"><path d="M207 172l-36 44M176 172l54 45 30 14 50 10M726 172l2 18-28 78M728 192l42 18 38 22 70 40M832 238l50-22 44-20 44-18 40-4M1180 170l120 92M60 470l-14 60 8 60 2 80-12 60-14 200 30 100M1290 1600l-20 130-50 60 60 330-20 140-50 70M1230 980l20 120 40 60M0 1500l60 14M0 1690l40 14 60 8M1290 2250l-70 80M1240 2300l50 130M110 2540l20-30M610 2560l30-60M1100 2560l10-60M1120 2440l60-60 110-40"/></g>
        <g stroke="#d0d5e4" stroke-width="13"><path d="M207 172l-36 44M176 172l54 45 30 14 50 10M726 172l2 18-28 78M728 192l42 18 38 22 70 40M832 238l50-22 44-20 44-18 40-4M1180 170l120 92M60 470l-14 60 8 60 2 80-12 60-14 200 30 100M1290 1600l-20 130-50 60 60 330-20 140-50 70M1230 980l20 120 40 60M0 1500l60 14M0 1690l40 14 60 8M1290 2250l-70 80M1240 2300l50 130M110 2540l20-30M610 2560l30-60M1100 2560l10-60M1120 2440l60-60 110-40"/></g>
        <path d="M985 172l36 20 16 48M0 1300l70-40M1225 760l70 20M0 2115l70-60M0 785l60 12M1225 1285l70 8M1258 1700l-20 90 30 130 10 170-40 130M880 2560v-60M1225 935l70-30" stroke="#b5a8c8" stroke-width="13"/>
        <path d="M0 595l60 2M0 860l30 0 30-8M50 620l-6 140-14 160 30 110M169 177l-1 30M556 177l-10 60M740 177l-36 80M1204 177l60 80 26 60M1225 765l65 22M0 1550l60-6M0 1815l60 10M1240 1720l50 40M1250 1900l-20 230 20 180M1230 1060l30 100 10 140 20 60M1290 2440l-10 80-30 20-70 6M0 512l60-12" stroke="#6d8fe6" stroke-width="2"/>
      </g>
      <path d="M0 1530h4v40H0zM0 2118h3v14H0z" fill="#2f8bea"/>
      <g class="map-labels">
        <text x="384" y="200" fill="#a65a2c">Gakushuin Univ.</text>
        <circle cx="645" cy="189" r="19" fill="#b06030"/>
        <path d="M632 186l13-7 13 6-13 6zM637 191l8 4 8-4v6q-8 4-16 0zM634 187v9" fill="#f1e3d8" stroke="#f1e3d8"/>
        <text class="road" transform="translate(164 254) rotate(-58)">NEL</text>
        <text class="road" transform="translate(-6 461) rotate(-22)">VENU</text>
        <text class="road" transform="translate(-18 1206) rotate(50)">号</text>
        <text x="42" y="1346" fill="#209028">C</text>
        <g fill="#a65a2c"><text x="-17" y="1782">ersity</text><text x="-20" y="1814">Tokyo</text><text x="-10" y="1846">mpus</text></g>
        <text class="road" x="-14" y="1922">A-DO</text>
        <g class="road"><text transform="translate(-20 2272) rotate(25)">都</text><text transform="translate(-5 2300) rotate(25)">道</text><text transform="translate(14 2320) rotate(22)">4</text><text transform="translate(23 2345) rotate(22)">2</text><text transform="translate(34 2368) rotate(22)">0</text><text transform="translate(38 2390) rotate(25)">号</text></g>
        <text x="1213" y="925" fill="#6d6d72">use</text>
        <text x="1230" y="1298" fill="#4b46c8">ka</text><text x="1228" y="1329" fill="#4b46c8">arden</text>
      </g>
      <g class="shields">
        <use href="#hex" x="904" y="208"/><text x="904" y="217">437</text>
        <use href="#hex" x="51" y="742"/><text x="48" y="752">317</text>
        <use href="#hex" x="76" y="985"/><text x="64" y="994">4</text>
        <path d="M1231 1117q24-8 47 0 7 28-23 46-31-18-24-46z" fill="#1164e6" stroke="#1164e6" stroke-width="5"/><path d="M1234 1120q21-6 41 0 5 23-20 39-26-16-21-39z" fill="#0f5cd8" stroke="#dbe6fa" stroke-width="3"/><text x="1254" y="1146">20</text>
        <use href="#hex" x="1245" y="2041"/><text x="1245" y="2050">415</text>
        <use href="#hex" x="1311" y="1909"/>
      </g>
    </svg>
    <div class="map-controls">
      <div class="trip-card"></div>
      <button class="refresh" type="button">Refresh</button>
    </div>
  </main>

  <nav class="tabs">
    <a class="tab active" href="#map"><svg width="80" height="80" viewBox="0 0 80 80" aria-hidden="true"><path d="M7 23L26 9v56L10 74q-4 0-4-4V25zM30 9l18 12v53L30 62zM52 21L68 9q6 0 6 4v48l-22 13z"/></svg>Map</a>
    <a class="tab" href="#trips"><svg width="80" height="80" viewBox="0 0 80 80" aria-hidden="true"><path d="M23 6h7q2 0 4 3l17 22h20q8 2 8 8t-8 8H51L34 70q-2 3-4 3h-7l10-26H15l-7 8H2l4-16-4-16h6l7 8h18z"/></svg>Trips</a>
    <a class="tab" href="#chats"><svg width="80" height="80" viewBox="0 0 80 80" aria-hidden="true"><path d="M16 7h46q12 0 12 11v31q0 11-12 11H42L26 73q-3 2-3-1V60h-7Q6 60 6 49V18Q6 7 16 7z"/></svg>Chats</a>
    <a class="tab" href="#profile"><svg width="80" height="80" viewBox="0 0 80 80" aria-hidden="true"><ellipse cx="40" cy="22" rx="16" ry="17"/><path d="M7 70q1-24 33-24t33 24q0 5-5 5H12q-5 0-5-5z"/></svg>Profile</a>
    <div class="home-bar"></div>
  </nav>
</div>

<div class="overlay">
  <section class="dialog" role="dialog" aria-labelledby="dialog-title">
    <header class="dialog-head">
      <h1 id="dialog-title">Create Activity</h1>
      <button class="close" type="button" aria-label="Close"><svg width="40" height="40" viewBox="0 0 40 40" aria-hidden="true"><path d="M3 3l34 34M37 3L3 37"/></svg></button>
    </header>
    <form class="dialog-form">
      <div class="dialog-body">
        <label class="heading" for="activity">What do you want to do?</label>
        <textarea id="activity" rows="2" maxlength="100" placeholder="e.g., Grab coffee and chat, Go for a hike, Watch sunset..."></textarea>
        <p class="counter">0/100 characters</p>
        <h2 class="heading">Pick an icon for your activity</h2>
        <div class="preview"><svg><use href="#i-target"/></svg><p>Your activity icon</p></div>
        <h3 class="choices-title">Popular choices:</h3>
        <div class="choices">
          <button type="button" class="choice selected" aria-label="Target"><svg><use href="#i-target"/></svg></button>
          <button type="button" class="choice" aria-label="Pizza"><svg><use href="#i-pizza"/></svg></button>
          <button type="button" class="choice" aria-label="Coffee"><svg><use href="#i-coffee"/></svg></button>
          <button type="button" class="choice" aria-label="Running"><svg><use href="#i-runner"/></svg></button>
          <button type="button" class="choice" aria-label="Movie"><svg><use href="#i-clapper"/></svg></button>
          <button type="button" class="choice" aria-label="Music"><svg><use href="#i-music"/></svg></button>
          <button type="button" class="choice" aria-label="Beach"><svg><use href="#i-beach"/></svg></button>
          <button type="button" class="choice" aria-label="Mountain"><svg><use href="#i-mountain"/></svg></button>
          <button type="button" class="choice" aria-label="Walking"><svg><use href="#i-walker"/></svg></button>
          <button type="button" class="choice" aria-label="Cheers"><svg><use href="#i-beers"/></svg></button>
          <button type="button" class="choice" aria-label="Art"><svg><use href="#i-palette"/></svg></button>
          <button type="button" class="choice" aria-label="Books"><svg><use href="#i-books"/></svg></button>
          <button type="button" class="choice" aria-label="Video games"><svg><use href="#i-gamepad"/></svg></button>
          <button type="button" class="choice" aria-label="Shopping"><svg><use href="#i-bags"/></svg></button>
          <button type="button" class="choice" aria-label="Swimming"><svg><use href="#i-swimmer"/></svg></button>
          <button type="button" class="choice" aria-label="Cycling"><svg><use href="#i-cyclist"/></svg></button>
          <button type="button" class="choice" aria-label="Yoga"><svg><use href="#i-yoga"/></svg></button>
          <button type="button" class="choice" aria-label="Bowling"><svg><use href="#i-bowling"/></svg></button>
          <button type="button" class="choice" aria-label="Circus"><svg><use href="#i-circus"/></svg></button>
          <button type="button" class="choice" aria-label="Theatre"><svg><use href="#i-masks"/></svg></button>
          <button type="button" class="choice" aria-label="Karaoke"><svg><use href="#i-mic"/></svg></button>
          <button type="button" class="choice" aria-label="Guitar"><svg><use href="#i-guitar"/></svg></button>
          <button type="button" class="choice" aria-label="Football"><svg><use href="#i-soccer"/></svg></button>
          <button type="button" class="choice" aria-label="Basketball"><svg><use href="#i-basketball"/></svg></button>
          <button type="button" class="choice" aria-label="Burger"><svg><use href="#i-burger"/></svg></button>
          <button type="button" class="choice" aria-label="Cake"><svg><use href="#i-cake"/></svg></button>
          <button type="button" class="choice" aria-label="Noodles"><svg><use href="#i-ramen"/></svg></button>
          <button type="button" class="choice" aria-label="Salad"><svg><use href="#i-salad"/></svg></button>
          <button type="button" class="choice" aria-label="Wine"><svg><use href="#i-wine"/></svg></button>
          <button type="button" class="choice" aria-label="Beer"><svg><use href="#i-beer"/></svg></button>
          <button type="button" class="choice" aria-label="Champagne"><svg><use href="#i-champagne"/></svg></button>
          <button type="button" class="choice" aria-label="Cocktail"><svg><use href="#i-martini"/></svg></button>
          <button type="button" class="choice" aria-label="Taco"><svg><use href="#i-taco"/></svg></button>
          <button type="button" class="choice" aria-label="Sushi"><svg><use href="#i-sushi"/></svg></button>
          <button type="button" class="choice" aria-label="Sandwich"><svg><use href="#i-sandwich"/></svg></button>
          <button type="button" class="choice" aria-label="Bubble tea"><svg><use href="#i-boba"/></svg></button>
          <button type="button" class="choice" aria-label="Ice cream"><svg><use href="#i-icecream"/></svg></button>
          <button type="button" class="choice" aria-label="Paella"><svg><use href="#i-paella"/></svg></button>
          <button type="button" class="choice" aria-label="Cheers"><svg><use href="#i-beers"/></svg></button>
          <button type="button" class="choice" aria-label="Soda"><svg><use href="#i-soda"/></svg></button>
          <button type="button" class="choice" aria-label="Dice"><svg><use href="#i-dice"/></svg></button>
          <button type="button" class="choice" aria-label="Cards"><svg><use href="#i-joker"/></svg></button>
          <button type="button" class="choice" aria-label="Painting"><svg><use href="#i-palette"/></svg></button>
          <button type="button" class="choice" aria-label="Reading"><svg><use href="#i-book"/></svg></button>
          <button type="button" class="choice" aria-label="Writing"><svg><use href="#i-pencil"/></svg></button>
          <button type="button" class="choice" aria-label="Headphones"><svg><use href="#i-headphones"/></svg></button>
          <button type="button" class="choice" aria-label="Phone"><svg><use href="#i-phone"/></svg></button>
          <button type="button" class="choice" aria-label="Laptop"><svg><use href="#i-laptop"/></svg></button>
          <button type="button" class="choice" aria-label="Person"><svg><use href="#i-person"/></svg></button>
          <button type="button" class="choice" aria-label="Dancing"><svg><use href="#i-dancer"/></svg></button>
          <button type="button" class="choice" aria-label="Ribbon"><svg><use href="#i-ribbon"/></svg></button>
          <button type="button" class="choice" aria-label="Climbing"><svg><use href="#i-climber"/></svg></button>
          <button type="button" class="choice" aria-label="Juggling"><svg><use href="#i-juggler"/></svg></button>
          <button type="button" class="choice" aria-label="Cheering"><svg><use href="#i-cheer"/></svg></button>
          <button type="button" class="choice" aria-label="Water polo"><svg><use href="#i-rower"/></svg></button>
          <button type="button" class="choice" aria-label="Rowing"><svg><use href="#i-rower"/></svg></button>
        </div>
      </div>
      <button class="submit" type="submit" disabled>Create Activity <svg><use href="#i-target"/></svg></button>
    </form>
  </section>
</div>
</body>
</html>
```
FILE: styles.css
```css
* { box-sizing: border-box; margin: 0; }
html, body { height: 100%; }
body { font-family: Inter, "Noto Sans CJK JP", sans-serif; color: #333; background: #fff; overflow: hidden; }
button, textarea { font: inherit; border: 0; }
svg { display: block; }
.sprite { position: absolute; width: 0; height: 0; }

.screen { height: 100%; display: grid; grid-template-rows: 177px minmax(0, 1fr) 248px; }

.status { display: flex; justify-content: space-between; align-items: flex-start; padding: 63px 113px 0 145px; color: #000; background: #fff; }
.status-left, .status-right { display: flex; align-items: center; }
.status-left { gap: 10px; font-size: 54px; line-height: 50px; font-weight: 600; }
.status-right { gap: 23px; }
.battery { position: relative; display: flex; align-items: center; justify-content: center; width: 85px; height: 45px; margin-right: 7px; border-radius: 14px; color: #fff; background: linear-gradient(90deg, #000 81%, #b4b4b4 81%); font-size: 40px; line-height: 45px; font-weight: 700; }
.battery::after { content: ""; position: absolute; left: 88px; top: 16px; width: 5px; height: 14px; border-radius: 0 5px 5px 0; background: #999; }

.map { position: relative; overflow: hidden; }
.map-art { position: absolute; width: 100%; height: 100%; }
.map-labels text { font-size: 30px; font-weight: 600; stroke: #f1eadc; stroke-width: 5px; paint-order: stroke; }
.map-labels .road, .map-labels .road text { font-size: 28px; font-weight: 500; fill: #3a3d48; }
.shields text { fill: #e6ebf5; font-size: 26px; font-weight: 700; text-anchor: middle; }
.map-controls { position: relative; display: flex; justify-content: space-between; align-items: flex-start; padding: 30px 30px 0 60px; }
.trip-card { width: 658px; height: 150px; margin-top: 30px; border: 6px solid #7f9fe4; border-radius: 60px; background: #4678e4; box-shadow: 0 12px 30px rgba(0, 0, 0, .3); }
.refresh { height: 112px; padding: 0 42px; border-radius: 56px; color: #007aff; background: #fff; font-size: 43px; font-weight: 600; box-shadow: 0 6px 18px rgba(0, 0, 0, .25); }

.tabs { display: grid; grid-template-columns: repeat(4, 1fr); grid-template-rows: 1fr auto; padding: 15px 0 25px; border-top: 2px solid #d8d8d6; background: #f7f6f4; }
.tab { display: flex; flex-direction: column; align-items: center; gap: 2px; color: #8c8c8c; font-size: 30px; line-height: 36px; font-weight: 500; text-decoration: none; }
.tab svg { fill: currentColor; }
.tab.active { color: #0084aa; }
.home-bar { grid-column: 1 / -1; justify-self: center; width: 462px; height: 14px; border-radius: 7px; background: #4b4b4b; }

.overlay { position: fixed; inset: 0; display: flex; padding: 261px 60px; background: rgba(0, 0, 0, .5); }
.dialog { flex: 1; min-width: 0; display: flex; flex-direction: column; border-radius: 60px; background: #fff; box-shadow: 0 24px 72px rgba(0, 0, 0, .36); }
.dialog-head { display: flex; justify-content: space-between; align-items: center; padding: 60px 60px 48px; border-bottom: 3px solid #f0f0f0; }
.dialog-head h1 { font-size: 68px; line-height: 84px; font-weight: 700; }
.close { display: grid; place-items: center; width: 120px; height: 120px; padding: 0; border-radius: 50%; background: #f5f5f5; }
.close path { fill: none; stroke: #333; stroke-width: 6; stroke-linecap: round; }

.dialog-form { flex: 1; min-height: 0; display: flex; flex-direction: column; padding: 0 60px 60px; }
.dialog-body { flex: 1; min-height: 0; margin: 0 -12px; padding: 48px 12px 0; overflow: hidden auto; scrollbar-width: none; }
.heading { display: block; margin-bottom: 36px; font-size: 52px; line-height: 65px; font-weight: 600; }
textarea { display: block; width: 100%; padding: 48px; border: 6px solid #e0e0e0; border-radius: 36px; background: #fafafa; color: #333; font-size: 46px; line-height: 57px; resize: none; outline: 0; overflow: hidden; }
textarea::placeholder { color: #999; opacity: 1; }
.counter { margin: 12px 0 60px; text-align: right; color: #999; font-size: 36px; line-height: 45px; }
.preview { display: flex; flex-direction: column; align-items: center; gap: 24px; padding: 60px 48px 48px; border: 6px solid #e8f0fe; border-radius: 48px; background: #f8f9ff; }
.preview svg { width: 120px; height: 120px; }
.preview p, .choices-title { color: #666; font-size: 41px; font-weight: 500; line-height: 50px; }
.choices-title { margin: 83px 0 36px; line-height: 51px; }
.choices { display: grid; grid-template-columns: repeat(8, 1fr); grid-auto-rows: 95px 96px; gap: 24px 6px; }
.choice { display: grid; place-items: center; padding: 0; border-radius: 36px; background: #f5f5f5; }
.choice svg { width: 64px; height: 64px; }
.choice.selected { background: #007aff; transform: scale(1.1); }
.submit { display: flex; align-items: center; justify-content: center; gap: 28px; height: 168px; border-radius: 36px; background: #ccc; color: #fff; font-size: 52px; font-weight: 700; }
.submit svg { width: 68px; height: 68px; }
```
